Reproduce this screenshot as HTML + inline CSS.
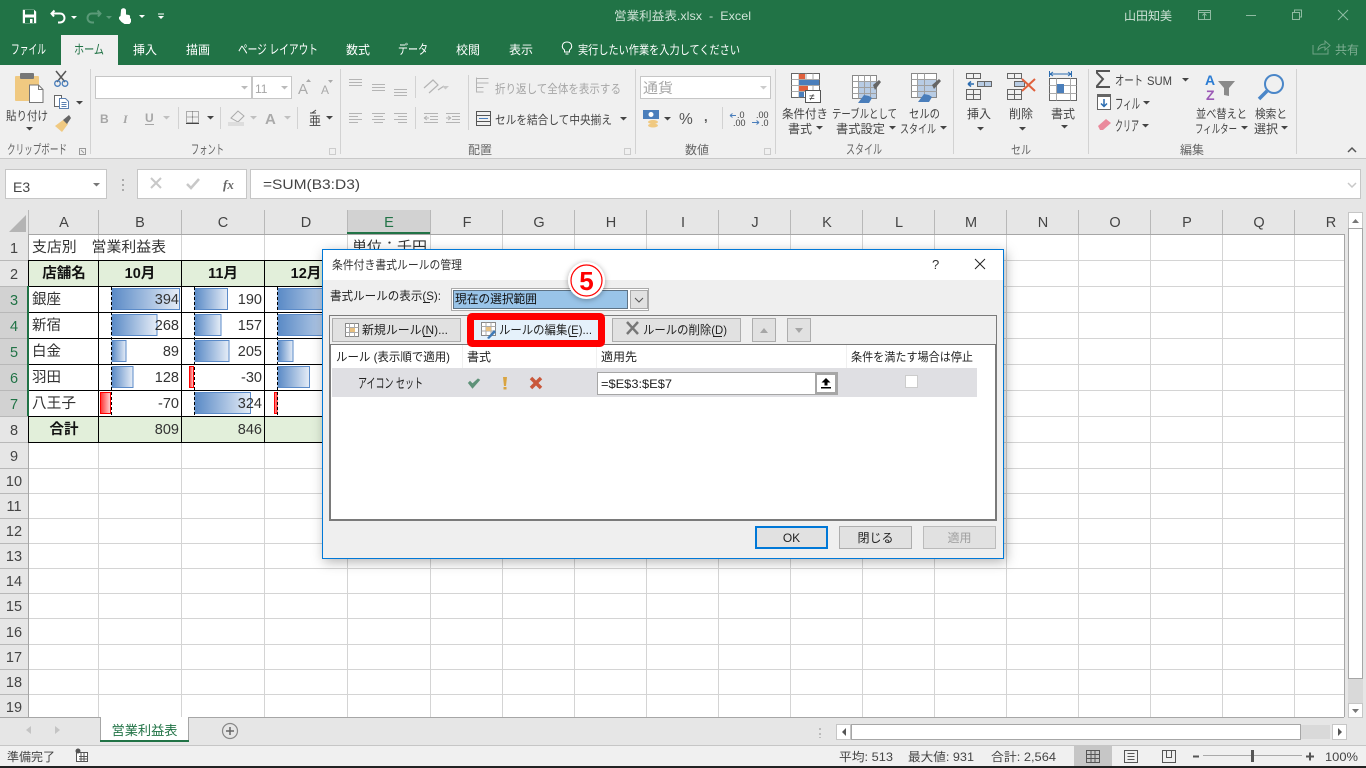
<!DOCTYPE html>
<html lang="ja"><head><meta charset="utf-8"><title>営業利益表.xlsx - Excel</title>
<style>
html,body{margin:0;padding:0;background:#e6e6e6;overflow:hidden}
svg{display:block;position:absolute;left:0;top:0}
text{font-family:"Liberation Sans","Noto Sans CJK JP",sans-serif;font-size:12px;fill:#444;white-space:pre}
.w text{fill:#fff}
.rb text{fill:#444}
.gl text{fill:#666}
.hd text{font-size:14.5px;fill:#444;text-anchor:middle}
.rn text{font-size:14.5px;fill:#444;text-anchor:middle}
.rs text{fill:#217346}
.c text{font-size:14.5px;fill:#333}
.n text{text-anchor:end}
.b text{font-weight:bold;fill:#111;text-anchor:middle}
.d text{fill:#222}
</style></head><body>
<svg width="1366" height="768" viewBox="0 0 1366 768" xmlns="http://www.w3.org/2000/svg">
<defs>
<linearGradient id="bl"><stop offset="0" stop-color="#5a8ac6"/><stop offset="1" stop-color="#e6edf7"/></linearGradient>
<linearGradient id="rd"><stop offset="0" stop-color="#ff3030"/><stop offset="1" stop-color="#ffd6d6"/></linearGradient>
<filter id="sh" x="-5%" y="-8%" width="110%" height="116%"><feDropShadow dx="2" dy="3" stdDeviation="6" flood-color="#000" flood-opacity=".3"/></filter>
<filter id="gl" x="-40%" y="-40%" width="180%" height="180%"><feDropShadow dx="0" dy="1" stdDeviation="3" flood-color="#000" flood-opacity=".35"/></filter>
<path id="dd" d="M0 0h7l-3.500 3.500z"/>
</defs>

<!-- backgrounds -->
<rect width="1366" height="768" fill="#e6e6e6"/>
<rect width="1366" height="65" fill="#217346"/>
<rect y="65" width="1366" height="93" fill="#f0f0f0"/>
<rect y="158" width="1366" height="1" fill="#c8c8c8"/>

<!-- QAT -->
<g fill="none" stroke="#fff" stroke-width="1.500">
<path d="M22.800 9.800h11.400l2 2v11.400h-13.400z" fill="#fff" stroke="none"/>
<rect x="25" y="10" width="9" height="4.500" fill="#217346" stroke="none"/>
<rect x="25" y="17.500" width="9" height="5.500" fill="#217346" stroke="none"/>
<rect x="30" y="19" width="2.500" height="4" fill="#fff" stroke="none"/>
<path d="M54 16.500l-2.500-3 3-3M52 13.500h8c6 0 6 9 0 9h-2" stroke-width="2"/>
<path d="M98 16.500l2.500-3-3-3M100 13.500h-8c-6 0-6 9 0 9h2" stroke="#5a9a78" stroke-width="2"/>
</g>
<path d="M71 16h6l-3 3z" fill="#fff"/><path d="M106 16h6l-3 3z" fill="#5a9a78"/><path d="M139 15h6l-3 3z" fill="#fff"/>
<path d="M121 10.500c0-3 5-3 5 0v4l3 .5c1.500.500 1 2 1 3l1 1v3l-1.500 2h-5l-3-2-2.500-3v-2l1.500-1z" fill="#fff"/>
<path d="M158 13.500h6v1h-6zM158 16h6l-3 3z" fill="#fff"/>

<!-- title -->
<g fill="#cfe3d7">
<text x="614" y="20" textLength="137" lengthAdjust="spacingAndGlyphs" style="fill:#cfe3d7">営業利益表.xlsx  -  Excel</text>
<text x="1124" y="20" textLength="48" lengthAdjust="spacingAndGlyphs" style="fill:#cfe3d7">山田知美</text>
</g>
<g fill="none" stroke="#8fbba2" stroke-width="1">
<path d="M1198.500 10.500h12v9h-12zM1198.500 12.500h12M1204.500 19v-5M1202.500 15.500l2-2 2 2"/>
<path d="M1246 15.500h10"/>
<path d="M1292.500 12.500h7v7h-7zM1294.500 12v-2h7v7h-2"/>
<path d="M1338 10l10 10M1348 10l-10 10"/>
<path d="M1313 45v9h15v-5M1318 50c0-4 3-6 7-6v-3l5 4.500-5 4.500v-3c-3 0-5 1-7 3z" stroke="#6fa385"/>
</g>
<text x="1335" y="54" textLength="24" lengthAdjust="spacingAndGlyphs" style="fill:#7fae93">共有</text>

<!-- tabs -->
<rect x="61" y="35" width="57" height="30" fill="#f0f0f0"/>
<g class="w">
<text x="11" y="54" textLength="35" lengthAdjust="spacingAndGlyphs" style="font-size:13px">ファイル</text>
<text x="74" y="54" textLength="30" lengthAdjust="spacingAndGlyphs" style="fill:#217346;font-size:13px">ホーム</text>
<text x="133" y="54" textLength="24" lengthAdjust="spacingAndGlyphs">挿入</text>
<text x="186" y="54" textLength="24" lengthAdjust="spacingAndGlyphs">描画</text>
<text x="238" y="54" textLength="80" lengthAdjust="spacingAndGlyphs" style="font-size:13px">ページ レイアウト</text>
<text x="346" y="54" textLength="24" lengthAdjust="spacingAndGlyphs">数式</text>
<text x="398" y="54" textLength="30" lengthAdjust="spacingAndGlyphs" style="font-size:13px">データ</text>
<text x="456" y="54" textLength="24" lengthAdjust="spacingAndGlyphs">校閲</text>
<text x="509" y="54" textLength="24" lengthAdjust="spacingAndGlyphs">表示</text>
<text x="578" y="54" textLength="162" lengthAdjust="spacingAndGlyphs">実行したい作業を入力してください</text>
</g>
<path d="M564.500 52v-2c-4-3-2-8 2.500-8s6.500 5 2.500 8v2zM565.500 54h3" fill="none" stroke="#fff" stroke-width="1"/>

<!-- group separators -->
<path d="M90.500 69v85M340.500 69v85M635.500 69v85M775.500 69v85M953.500 69v85M1088.500 69v85M1296.500 69v85" stroke="#d2d2d2" fill="none"/>
<path d="M468.500 75v55M178.500 107v22M220.500 107v22M297.500 107v22M415.500 76v22M415.500 107v22M722.500 107v22" stroke="#d2d2d2" fill="none"/>

<!-- clipboard -->
<rect x="15" y="76" width="24" height="25" rx="1" fill="#f0c981"/>
<rect x="20" y="73" width="14" height="6" rx="1" fill="#777"/>
<path d="M29.500 85h9l4.500 4.500v13h-13.500z" fill="#fff" stroke="#777"/>
<path d="M38.500 85v4.500h4.500" fill="none" stroke="#777"/>
<path d="M56 71l9 11M66 71l-9 11" stroke="#555" stroke-width="1.500"/>
<circle cx="57.500" cy="83.500" r="2.800" fill="none" stroke="#4a7ebb" stroke-width="1.300"/><circle cx="65" cy="83.500" r="2.800" fill="none" stroke="#4a7ebb" stroke-width="1.300"/>
<path d="M54.500 95.500h7v11h-7z" fill="#fff" stroke="#666"/>
<path d="M59.500 98.500h6l3 3v7h-9z" fill="#fff" stroke="#5a7fb0"/>
<path d="M61.500 102.500h5M61.500 104.500h5M61.500 106.500h5" stroke="#5a7fb0"/>
<use href="#dd" x="76" y="101" fill="#444"/>
<path d="M55 126l8-6 5 4-6 8z" fill="#f0c981"/><path d="M63 120l6-5 2 3-4 6z" fill="#666"/>
<text x="6" y="120" textLength="42" lengthAdjust="spacingAndGlyphs">貼り付け</text>
<use href="#dd" x="26" y="127" fill="#444"/>
<g class="gl">
<text x="7" y="154" textLength="60" lengthAdjust="spacingAndGlyphs" style="font-size:13px">クリップボード</text>
<text x="191" y="154" textLength="33" lengthAdjust="spacingAndGlyphs" style="font-size:13px">フォント</text>
<text x="468" y="154" textLength="24" lengthAdjust="spacingAndGlyphs">配置</text>
<text x="685" y="154" textLength="24" lengthAdjust="spacingAndGlyphs">数値</text>
<text x="846" y="154" textLength="36" lengthAdjust="spacingAndGlyphs" style="font-size:13px">スタイル</text>
<text x="1011" y="154" textLength="20" lengthAdjust="spacingAndGlyphs">セル</text>
<text x="1180" y="154" textLength="24" lengthAdjust="spacingAndGlyphs">編集</text>
</g>
<g fill="none" stroke="#999"><path d="M79.500 148.500h6v6h-6z"/><path d="M81 150l3 3"/></g>
<g fill="none" stroke="#ccc"><path d="M329.500 148.500h6v6h-6zM624.500 148.500h6v6h-6zM764.500 148.500h6v6h-6z"/></g>

<!-- font -->
<rect x="95.500" y="76.500" width="156" height="22" fill="#fff" stroke="#c6c6c6"/>
<rect x="252.500" y="76.500" width="39" height="22" fill="#fff" stroke="#c6c6c6"/>
<use href="#dd" x="241" y="86" fill="#bbb"/><use href="#dd" x="281" y="86" fill="#bbb"/>
<text x="255" y="93" style="fill:#a6a6a6">11</text>
<text x="298" y="94" style="font-size:15px;fill:#aaa">A</text><path d="M306 82h5l-2.500-3z" fill="#aaa"/>
<text x="321" y="94" style="font-size:12px;fill:#aaa">A</text><path d="M328 80h5l-2.500 3z" fill="#aaa"/>
<text x="100" y="123" style="font-weight:bold;fill:#a6a6a6">B</text>
<text x="123" y="123" style="font-style:italic;font-family:'Liberation Serif',serif;font-weight:bold;fill:#a6a6a6">I</text>
<text x="145" y="122" style="font-weight:bold;fill:#a6a6a6">U</text><path d="M145 124.500h9" stroke="#a6a6a6"/>
<use href="#dd" x="163" y="116" fill="#c0c0c0"/>
<path d="M186.500 111.500h12v11h-12zM192.500 111.500v11M186.500 117h12" fill="none" stroke="#666" stroke-dasharray="1 1"/><path d="M186 123.500h13" stroke="#444"/>
<use href="#dd" x="207" y="116" fill="#444"/>
<path d="M231 118l7-7 6 5-6 6z" fill="none" stroke="#aaa"/><rect x="228" y="122" width="16" height="4" fill="#ddd"/>
<use href="#dd" x="250" y="116" fill="#c0c0c0"/>
<text x="265" y="124" style="font-size:15px;font-weight:bold;fill:#aaa">A</text>
<use href="#dd" x="284" y="116" fill="#c0c0c0"/>
<text x="309" y="125" style="font-size:12px">亜</text><path d="M310 113h6M316 110l-4 3" stroke="#444" fill="none"/>
<use href="#dd" x="326" y="116" fill="#444"/>

<!-- alignment -->
<path d="M349 79.500h13M349 82.500h13M349 85.500h13M372 84.500h13M372 87.500h13M372 90.500h13M394 89.500h13M394 92.500h13M394 95.500h13" stroke="#b4b4b4" fill="none"/>
<path d="M349 113.500h13M349 116.500h9M349 119.500h13M349 122.500h9M372 113.500h13M374 116.500h9M372 119.500h13M374 122.500h9M394 113.500h13M398 116.500h9M394 119.500h13M398 122.500h9" stroke="#b4b4b4" fill="none"/>
<path d="M424 113.500h14M430 116.500h8M430 119.500h8M424 122.500h14M424 118h5M424 118l3-2M424 118l3 2M446 113.500h14M452 116.500h8M452 119.500h8M446 122.500h14M446 118h5M451 118l-3-2M451 118l-3 2" stroke="#b4b4b4" fill="none"/>
<path d="M424 88l9-8 5 5-9 8M438 90l6-4" fill="none" stroke="#b4b4b4" stroke-width="1.200"/><use href="#dd" x="442" y="86" fill="#c8c8c8"/>
<path d="M476.500 78.500h12M476.500 83h12M476.500 87.500h7M476.500 92h7" stroke="#b4b4b4" fill="none"/><path d="M476.500 77.500v15" stroke="#b4b4b4"/>
<text x="495" y="93" textLength="126" lengthAdjust="spacingAndGlyphs" style="fill:#a6a6a6">折り返して全体を表示する</text>
<rect x="476.500" y="111.500" width="14" height="14" fill="none" stroke="#555"/><path d="M477 115.500h13M477 121.500h13" stroke="#555" fill="none"/><path d="M479 118.500h9" stroke="#4a7ebb"/>
<text x="495" y="124" textLength="117" lengthAdjust="spacingAndGlyphs">セルを結合して中央揃え</text>
<use href="#dd" x="620" y="117" fill="#444"/>

<!-- number -->
<rect x="640.500" y="76.500" width="130" height="22" fill="#fff" stroke="#c6c6c6"/>
<text x="643" y="93" textLength="30" lengthAdjust="spacingAndGlyphs" style="fill:#a6a6a6;font-size:14px">通貨</text>
<use href="#dd" x="760" y="86" fill="#ccc"/>
<rect x="643" y="110" width="16" height="9" fill="#4a7ebb"/><circle cx="651" cy="114.500" r="2.500" fill="#fff"/>
<ellipse cx="653" cy="122" rx="5" ry="2" fill="#f0c981"/><ellipse cx="653" cy="125.500" rx="5" ry="2" fill="#f0c981"/>
<use href="#dd" x="664" y="117" fill="#444"/>
<text x="679" y="124" style="font-size:15.500px;fill:#555">%</text>
<text x="704" y="121" style="font-size:13px;font-weight:bold;fill:#555">,</text>
<text x="737" y="118" style="font-size:9px">.0</text><text x="733" y="126" style="font-size:9px">.00</text>
<path d="M730 115.500h6M730 115.500l2.500-2M730 115.500l2.500 2" stroke="#4a7ebb" fill="none"/>
<text x="756" y="118" style="font-size:9px">.00</text><text x="761" y="126" style="font-size:9px">.0</text>
<path d="M752 122.500h7M759 122.500l-2.500-2M759 122.500l-2.500 2" stroke="#4a7ebb" fill="none"/>

<!-- styles -->
<rect x="791.500" y="73.500" width="28" height="24" fill="#fff" stroke="#666"/>
<path d="M791.500 79.500h28M791.500 85.500h28M791.500 91.500h28M799 73.500v24M806 73.500v24M813 73.500v24" stroke="#aaa" fill="none"/>
<rect x="799" y="74" width="6" height="5" fill="#e0603c"/><rect x="799" y="80" width="20" height="5" fill="#4a7ebb"/><rect x="799" y="86" width="9" height="5" fill="#e0603c"/><rect x="799" y="92" width="5" height="5" fill="#4a7ebb"/>
<rect x="805.500" y="90.500" width="15" height="12" fill="#fff" stroke="#555"/><text x="809" y="100.500" style="font-size:10px;fill:#333">≠</text>
<rect x="852.500" y="75.500" width="24" height="23" fill="#fff" stroke="#888"/>
<rect x="858" y="81" width="18" height="17" fill="#b8cce4"/>
<path d="M852.500 81.500h24M852.500 87.500h24M852.500 93.500h24M858.500 75.500v23M864.500 75.500v23M870.500 75.500v23" stroke="#a0a0a0" fill="none"/>
<path d="M873 85l6-5 2 2-6 8z" fill="#666"/><path d="M858 103l6-8 5 1 3 2-3 5z" fill="#4a7ebb"/>
<rect x="911.500" y="73.500" width="25" height="24" fill="#fff" stroke="#888"/>
<rect x="917" y="79" width="19" height="18" fill="#b8cce4"/>
<path d="M911.500 79.500h25M911.500 85.500h25M911.500 91.500h25M917.500 73.500v24M924.500 73.500v24" stroke="#a0a0a0" fill="none"/>
<path d="M932 85l7-6 2 2-7 8z" fill="#666"/><path d="M918 102l6-8 5 1 3 2-3 5z" fill="#4a7ebb"/>
<text x="782" y="118" textLength="46" lengthAdjust="spacingAndGlyphs">条件付き</text>
<text x="788" y="133" textLength="24" lengthAdjust="spacingAndGlyphs">書式</text><use href="#dd" x="816" y="126" fill="#444"/>
<text x="832" y="118" textLength="65" lengthAdjust="spacingAndGlyphs">テーブルとして</text>
<text x="836" y="133" textLength="49" lengthAdjust="spacingAndGlyphs">書式設定</text><use href="#dd" x="889" y="126" fill="#444"/>
<text x="909" y="118" textLength="31" lengthAdjust="spacingAndGlyphs">セルの</text>
<text x="900" y="133" textLength="36" lengthAdjust="spacingAndGlyphs">スタイル</text><use href="#dd" x="940" y="126" fill="#444"/>

<!-- cells -->
<g fill="none" stroke="#666">
<path d="M966.500 73.500h14v5h-14zM973.500 73.500v5M966.500 89.500h14v10h-14zM973.500 89.500v10M966.500 94.500h14"/>
<path d="M1007.500 73.500h14v5h-14zM1014.500 73.500v5M1007.500 89.500h14v10h-14zM1014.500 89.500v10M1007.500 94.500h14"/>
</g>
<rect x="977.500" y="81.500" width="14" height="5" fill="#b8cce4" stroke="#666"/><path d="M984.500 81.500v5" stroke="#666"/>
<path d="M968 84h6M968 84l3-2.500M968 84l3 2.500" fill="none" stroke="#2b6cb0" stroke-width="1.500"/>
<rect x="1014.500" y="81.500" width="10" height="5" fill="#b8cce4" stroke="#666"/>
<path d="M1022 79l13 12M1035 79l-13 12" stroke="#e0603c" stroke-width="2"/>
<rect x="1049.500" y="78.500" width="27" height="22" fill="#fff" stroke="#666"/>
<path d="M1049.500 85.500h27M1049.500 93.500h27M1056.500 78.500v22M1070.500 78.500v22" stroke="#aaa" fill="none"/>
<rect x="1057" y="84" width="7" height="9" fill="#4a7ebb"/>
<path d="M1049.500 71v6M1071.500 71v6M1050 74h21M1050 74l3-2M1050 74l3 2M1071 74l-3-2M1071 74l-3 2" stroke="#2b6cb0" fill="none"/>
<text x="967" y="118" textLength="24" lengthAdjust="spacingAndGlyphs">挿入</text><use href="#dd" x="977" y="127" fill="#444"/>
<text x="1009" y="118" textLength="24" lengthAdjust="spacingAndGlyphs">削除</text><use href="#dd" x="1019" y="127" fill="#444"/>
<text x="1051" y="118" textLength="24" lengthAdjust="spacingAndGlyphs">書式</text><use href="#dd" x="1061" y="125" fill="#444"/>

<!-- edit -->
<path d="M1110 71h-13v2l6 6-6 7v1h13" fill="none" stroke="#555" stroke-width="2"/>
<text x="1115" y="85" textLength="28" lengthAdjust="spacingAndGlyphs" style="font-size:13px">オート</text><text x="1147" y="85" textLength="25" lengthAdjust="spacingAndGlyphs">SUM</text><use href="#dd" x="1182" y="78" fill="#444"/>
<rect x="1097.500" y="94.500" width="13" height="15" fill="#fff" stroke="#666"/><rect x="1097" y="94" width="14" height="3" fill="#666"/>
<path d="M1104 99v7M1101 103.500l3 3 3-3" fill="none" stroke="#2b6cb0" stroke-width="1.500"/>
<text x="1115" y="109" textLength="25" lengthAdjust="spacingAndGlyphs" style="font-size:14px">フィル</text><use href="#dd" x="1143" y="101" fill="#444"/>
<path d="M1098 126l8-7 5 4-8 7h-3z" fill="#ea8a9c"/>
<text x="1115" y="131" textLength="24" lengthAdjust="spacingAndGlyphs" style="font-size:14px">クリア</text><use href="#dd" x="1142" y="124" fill="#444"/>
<text x="1205" y="85" style="font-size:14px;font-weight:bold;fill:#2b7cd3">A</text>
<text x="1206" y="100" style="font-size:14px;font-weight:bold;fill:#9b59b6">Z</text>
<path d="M1218 81h17l-6 7v8l-5-1v-7z" fill="#8a8a8a"/>
<circle cx="1274" cy="84" r="9" fill="none" stroke="#4a86c8" stroke-width="2"/>
<path d="M1267 91l-8 8" stroke="#4a86c8" stroke-width="3.500"/>
<text x="1196" y="118" textLength="51" lengthAdjust="spacingAndGlyphs">並べ替えと</text>
<text x="1195" y="133" textLength="42" lengthAdjust="spacingAndGlyphs">フィルター</text><use href="#dd" x="1241" y="126" fill="#444"/>
<text x="1255" y="118" textLength="32" lengthAdjust="spacingAndGlyphs">検索と</text>
<text x="1254" y="133" textLength="24" lengthAdjust="spacingAndGlyphs">選択</text><use href="#dd" x="1281" y="126" fill="#444"/>
<path d="M1348 152l4-4 4 4" fill="none" stroke="#555" stroke-width="1.500"/>

<!-- formula bar -->
<rect x="5.500" y="169.500" width="101" height="29" fill="#fff" stroke="#c6c6c6"/>
<text x="13" y="192" style="font-size:14px">E3</text>
<use href="#dd" x="93" y="183" fill="#777"/>
<path d="M122 179h2v2h-2zM122 184h2v2h-2zM122 189h2v2h-2z" fill="#aaa"/>
<rect x="137.500" y="169.500" width="109" height="29" fill="#fff" stroke="#c6c6c6"/>
<path d="M151 178l10 10M161 178l-10 10" stroke="#c8c8c8" stroke-width="2"/>
<path d="M187 184l4 4 8-9" fill="none" stroke="#c8c8c8" stroke-width="2.500"/>
<text x="223" y="189" style="font-family:'Liberation Serif',serif;font-style:italic;font-weight:bold;font-size:13px;fill:#666">fx</text>
<rect x="250.500" y="169.500" width="1110" height="29" fill="#fff" stroke="#c6c6c6"/>
<text x="263" y="189" textLength="97" lengthAdjust="spacingAndGlyphs" style="font-size:14px">=SUM(B3:D3)</text>
<path d="M1348 183l4 4 4-4" fill="none" stroke="#c8c8c8" stroke-width="1.500"/>

<!-- sheet area -->
<rect x="29" y="234" width="1315" height="483" fill="#fff"/>
<rect x="0" y="210" width="1344" height="24" fill="#e6e6e6"/>
<rect x="0" y="234" width="29" height="483" fill="#e6e6e6"/>
<rect x="347" y="210" width="83" height="24" fill="#d2d2d2"/>
<rect x="0" y="286" width="29" height="130" fill="#d2d2d2"/>
<path d="M9 232h17v-17z" fill="#b4b4b4"/>
<path d="M98.500 234V717M181.500 234V717M264.500 234V717M347.500 234V717M430.500 234V717M502.500 234V717M574.500 234V717M646.500 234V717M718.500 234V717M790.500 234V717M862.500 234V717M934.500 234V717M1006.500 234V717M1078.500 234V717M1150.500 234V717M1222.500 234V717M1294.500 234V717" stroke="#d4d4d4" fill="none"/>
<path d="M29 260.500H1344M29 286.500H1344M29 312.500H1344M29 338.500H1344M29 364.500H1344M29 390.500H1344M29 416.500H1344M29 442.500H1344M29 468.500H1344M29 493.500H1344M29 518.500H1344M29 543.500H1344M29 568.500H1344M29 593.500H1344M29 618.500H1344M29 644.500H1344M29 669.500H1344M29 694.500H1344" stroke="#d4d4d4" fill="none"/>
<!-- header separators -->
<path d="M98.500 210v24M181.500 210v24M264.500 210v24M347.500 210v24M430.500 210v24M502.500 210v24M574.500 210v24M646.500 210v24M718.500 210v24M790.500 210v24M862.500 210v24M934.500 210v24M1006.500 210v24M1078.500 210v24M1150.500 210v24M1222.500 210v24M1294.500 210v24M28.500 210v24" stroke="#b8b8b8" fill="none"/>
<path d="M0 260.500h28M0 286.500h28M0 312.500h28M0 338.500h28M0 364.500h28M0 390.500h28M0 416.500h28M0 442.500h28M0 468.500h28M0 493.500h28M0 518.500h28M0 543.500h28M0 568.500h28M0 593.500h28M0 618.500h28M0 644.500h28M0 669.500h28M0 694.500h28" stroke="#b8b8b8" fill="none"/>
<path d="M28 234.500H1344M28.500 234V717M28 717.500H1344M1344.500 234V717" stroke="#a6a6a6" fill="none"/>
<rect x="347" y="232" width="83" height="2" fill="#217346"/>
<g class="hd">
<text x="64" y="227">A</text><text x="140" y="227">B</text><text x="223" y="227">C</text><text x="306" y="227">D</text><text x="389" y="227" style="fill:#217346">E</text><text x="467" y="227">F</text><text x="539" y="227">G</text><text x="611" y="227">H</text><text x="683" y="227">I</text><text x="755" y="227">J</text><text x="827" y="227">K</text><text x="899" y="227">L</text><text x="971" y="227">M</text><text x="1043" y="227">N</text><text x="1115" y="227">O</text><text x="1187" y="227">P</text><text x="1259" y="227">Q</text><text x="1331" y="227">R</text>
</g>
<g class="rn">
<text x="14" y="253">1</text><text x="14" y="279">2</text>
<g class="rs"><text x="14" y="305">3</text><text x="14" y="331">4</text><text x="14" y="357">5</text><text x="14" y="383">6</text><text x="14" y="409">7</text></g>
<text x="14" y="435">8</text><text x="14" y="461">9</text><text x="14" y="486">10</text><text x="14" y="511">11</text><text x="14" y="536">12</text><text x="14" y="561">13</text><text x="14" y="586">14</text><text x="14" y="611">15</text><text x="14" y="637">16</text><text x="14" y="662">17</text><text x="14" y="687">18</text><text x="14" y="712">19</text>
</g>

<!-- table fills -->
<rect x="29" y="261" width="319" height="25" fill="#e2efda"/>
<rect x="29" y="417" width="319" height="25" fill="#e2efda"/>
<rect x="29" y="287" width="319" height="129" fill="#fff"/>

<!-- data bars -->
<g stroke="#5b8bc9" stroke-width="1">
<rect x="112" y="288.500" width="67.500" height="21" fill="url(#bl)"/>
<rect x="112" y="314.500" width="45" height="21" fill="url(#bl)"/>
<rect x="112" y="340.500" width="14" height="21" fill="url(#bl)"/>
<rect x="112" y="366.500" width="21" height="21" fill="url(#bl)"/>
<rect x="195" y="288.500" width="32.500" height="21" fill="url(#bl)"/>
<rect x="195" y="314.500" width="26" height="21" fill="url(#bl)"/>
<rect x="195" y="340.500" width="34" height="21" fill="url(#bl)"/>
<rect x="195" y="392.500" width="55.500" height="21" fill="url(#bl)"/>
<rect x="278" y="288.500" width="70" height="21" fill="url(#bl)"/>
<rect x="278" y="314.500" width="70" height="21" fill="url(#bl)"/>
<rect x="278" y="340.500" width="15" height="21" fill="url(#bl)"/>
<rect x="278" y="366.500" width="31.500" height="21" fill="url(#bl)"/>
</g>
<g stroke="#f00" stroke-width="1">
<rect x="100.500" y="392.500" width="10" height="21" fill="url(#rd)"/>
<rect x="189.500" y="366.500" width="4" height="21" fill="url(#rd)"/>
<rect x="274.500" y="392.500" width="2.500" height="21" fill="url(#rd)"/>
</g>
<path d="M111.500 287V416M194.500 287V416M277.500 287V416" stroke="#000" stroke-dasharray="3 2" fill="none"/>
<!-- table borders -->
<path d="M28 260.500H348M28 286.500H348M28 312.500H348M28 338.500H348M28 364.500H348M28 390.500H348M28 416.500H348M28 442.500H348M28.500 260V443M98.500 260V443M181.500 260V443M264.500 260V443M347.500 260V443" stroke="#000" fill="none"/>
<rect x="27" y="286" width="2" height="130" fill="#217346"/>

<!-- cell text -->
<g class="c">
<text x="32" y="252" textLength="134" lengthAdjust="spacingAndGlyphs">支店別　営業利益表</text>
<text x="352" y="252" textLength="75" lengthAdjust="spacingAndGlyphs">単位：千円</text>
<text x="32" y="304" textLength="29" lengthAdjust="spacingAndGlyphs">銀座</text>
<text x="32" y="330" textLength="29" lengthAdjust="spacingAndGlyphs">新宿</text>
<text x="32" y="356" textLength="29" lengthAdjust="spacingAndGlyphs">白金</text>
<text x="32" y="382" textLength="29" lengthAdjust="spacingAndGlyphs">羽田</text>
<text x="32" y="408" textLength="44" lengthAdjust="spacingAndGlyphs">八王子</text>
</g>
<g class="c b">
<text x="64" y="278">店舗名</text><text x="140" y="278">10月</text><text x="223" y="278">11月</text><text x="306" y="278">12月</text>
<text x="64" y="434">合計</text>
</g>
<g class="c n">
<text x="179" y="304">394</text><text x="179" y="330">268</text><text x="179" y="356">89</text><text x="179" y="382">128</text><text x="179" y="408">-70</text><text x="179" y="434">809</text>
<text x="262" y="304">190</text><text x="262" y="330">157</text><text x="262" y="356">205</text><text x="262" y="382">-30</text><text x="262" y="408">324</text><text x="262" y="434">846</text>
</g>

<!-- dialog -->
<rect x="322.500" y="249.500" width="681" height="309" fill="#efefef" stroke="#0078d7" filter="url(#sh)"/>
<rect x="323" y="250" width="680" height="30" fill="#fff"/>
<text x="332" y="269" textLength="130" lengthAdjust="spacingAndGlyphs" style="fill:#333">条件付き書式ルールの管理</text>
<text x="932" y="269" style="font-size:13px;fill:#333">?</text>
<path d="M975 259l10 10M985 259l-10 10" stroke="#222" fill="none"/>
<g class="d">
<text x="330" y="300" textLength="111" lengthAdjust="spacingAndGlyphs">書式ルールの表示(S):</text>
</g>
<path d="M423 302.500h7" stroke="#222"/>
<rect x="451.500" y="288.500" width="197" height="22" fill="#fff" stroke="#aaa"/>
<rect x="453" y="290" width="175" height="19" fill="#99c4e8"/>
<rect x="453.500" y="290.500" width="174" height="18" fill="none" stroke="#222" stroke-dasharray="1 1"/>
<rect x="630.500" y="290.500" width="17" height="18" fill="#e1e1e1" stroke="#aaa"/>
<path d="M635 298l4 4 4-4" fill="none" stroke="#555"/>
<text x="455" y="303" textLength="82" lengthAdjust="spacingAndGlyphs" style="fill:#111">現在の選択範囲</text>

<rect x="329.500" y="315.500" width="667" height="205" fill="#efefef" stroke="#7a7a7a"/>
<rect x="330.500" y="344.500" width="665" height="175" fill="#fff" stroke="#7a7a7a"/>
<rect x="332" y="345" width="645" height="23" fill="#fff"/>
<rect x="332" y="368" width="645" height="29" fill="#dfdfe3"/>
<path d="M462.500 345v23M596.500 345v23M846.500 345v23" stroke="#f0f0f0"/>

<!-- dialog buttons -->
<rect x="332.500" y="318.500" width="128" height="23" fill="#e1e1e1" stroke="#adadad"/>
<rect x="612.500" y="318.500" width="128" height="23" fill="#e1e1e1" stroke="#adadad"/>
<rect x="752.500" y="318.500" width="23" height="23" fill="#e1e1e1" stroke="#adadad"/>
<rect x="787.500" y="318.500" width="23" height="23" fill="#e1e1e1" stroke="#adadad"/>
<path d="M760 333l4-5 4 5z" fill="#a6a6a6"/><path d="M795 328l4 5 4-5z" fill="#a6a6a6"/>
<rect x="345.500" y="323.500" width="13" height="13" fill="#fff" stroke="#888"/><path d="M345.500 327.500h13M345.500 332.500h13M349.500 323.500v13M354.500 323.500v13" stroke="#aaa" fill="none"/><rect x="350" y="328" width="5" height="4" fill="#e8c080"/>
<text x="362" y="334" textLength="86" lengthAdjust="spacingAndGlyphs" style="fill:#222">新規ルール(N)...</text>
<path d="M423 336.500h8" stroke="#222"/>
<path d="M627 322l11 12M638 322l-11 12" stroke="#777" stroke-width="2.500"/>
<text x="643" y="334" textLength="84" lengthAdjust="spacingAndGlyphs" style="fill:#222">ルールの削除(D)</text>
<path d="M713 336.500h9" stroke="#222"/>

<rect x="467" y="313" width="138" height="34" rx="5" fill="#f00"/>
<rect x="474" y="320" width="124" height="20" fill="#e5f1fb"/>
<rect x="481.500" y="322.500" width="14" height="13" fill="#fff" stroke="#888"/><path d="M481.500 326.500h14M481.500 331h14M486 322.500v13M491 322.500v13" stroke="#aaa" fill="none"/><rect x="486" y="327" width="5" height="4" fill="#e8c080"/>
<path d="M487 338l7-8 2 2-7 7z" fill="#3f7ab8"/>
<text x="499" y="334" textLength="93" lengthAdjust="spacingAndGlyphs" style="fill:#222">ルールの編集(E)...</text>
<path d="M569 336.500h8" stroke="#222"/>

<!-- list -->
<g class="d">
<text x="336" y="361" textLength="114" lengthAdjust="spacingAndGlyphs">ルール (表示順で適用)</text>
<text x="467" y="361" textLength="24" lengthAdjust="spacingAndGlyphs">書式</text>
<text x="601" y="361" textLength="36" lengthAdjust="spacingAndGlyphs">適用先</text>
<text x="851" y="361" textLength="122" lengthAdjust="spacingAndGlyphs">条件を満たす場合は停止</text>
<text x="358" y="388" textLength="65" lengthAdjust="spacingAndGlyphs" style="font-size:13.500px">アイコン セット</text>
</g>
<path d="M468.500 383l4 5 7-8-1.500-1-5.500 5-2.500-2.500z" fill="#5f9279" stroke="#5f9279"/>
<path d="M503 377h4l-1 9h-2zM503.500 387h3v2.500h-3z" fill="#d9a441"/>
<path d="M531 378l10 10M541 378l-10 10" stroke="#c9573a" stroke-width="3.500"/>
<rect x="597.500" y="372.500" width="240" height="22" fill="#fff" stroke="#a6a6a6" stroke-width="1"/>
<rect x="815" y="372" width="23" height="23" fill="#a6a6a6"/>
<rect x="817" y="375" width="18" height="17" fill="#fff"/>
<path d="M826 378l-4.500 4.500h3v3h3v-3h3zM821 387h10v1.500h-10z" fill="#000"/>
<text x="601" y="388" textLength="71" lengthAdjust="spacingAndGlyphs" style="fill:#222">=$E$3:$E$7</text>
<rect x="905.500" y="375.500" width="12" height="12" fill="#fff" stroke="#ccc"/>

<!-- circled 5 -->
<circle cx="586.500" cy="280.500" r="18.500" fill="#fff" filter="url(#gl)"/>
<circle cx="586.500" cy="280.500" r="15.500" fill="#fff" stroke="#f00" stroke-width="1.200"/>
<text x="586.500" y="290" text-anchor="middle" style="font-size:26px;font-weight:bold;fill:#f00">5</text>

<!-- dialog footer -->
<rect x="756" y="527" width="71" height="21" fill="#e1e1e1" stroke="#0078d7" stroke-width="2"/>
<text x="791.500" y="542" text-anchor="middle" style="fill:#222">OK</text>
<rect x="839.500" y="526.500" width="72" height="22" fill="#e1e1e1" stroke="#adadad"/>
<text x="875.500" y="542" text-anchor="middle" style="fill:#222">閉じる</text>
<rect x="923.500" y="526.500" width="72" height="22" fill="#e1e1e1" stroke="#bbb"/>
<text x="959.500" y="542" text-anchor="middle" style="fill:#a0a0a0">適用</text>

<!-- vertical scrollbar -->
<rect x="1345" y="210" width="21" height="507" fill="#e6e6e6"/>
<rect x="1348" y="228" width="15" height="451" fill="#d9d9d9"/>
<rect x="1348.500" y="212.500" width="14" height="16" fill="#fff" stroke="#c6c6c6"/>
<path d="M1352 223l3.500-4 3.500 4z" fill="#777"/>
<rect x="1348.500" y="228.500" width="14" height="450" fill="#fff" stroke="#a6a6a6"/>
<rect x="1348" y="679" width="15" height="24" fill="#d9d9d9"/>
<rect x="1348.500" y="703.500" width="14" height="14" fill="#fff" stroke="#c6c6c6"/>
<path d="M1352 709l3.500 4 3.500-4z" fill="#777"/>

<!-- sheet tabs -->
<rect x="0" y="718" width="1366" height="27" fill="#e6e6e6"/>
<rect x="0" y="717" width="1344" height="1" fill="#a6a6a6"/>
<path d="M26 733l5-4v8zM60 733l-5-4v8z" transform="translate(0 -3)" fill="#c4c4c4"/>
<path d="M100.500 718v24M188.500 718v24" stroke="#a6a6a6"/>
<rect x="101" y="717" width="87" height="24" fill="#fff"/>
<rect x="100" y="740" width="89" height="2" fill="#217346"/>
<text x="144.500" y="735" text-anchor="middle" textLength="66" lengthAdjust="spacingAndGlyphs" style="fill:#217346;font-size:13px">営業利益表</text>
<circle cx="230" cy="731" r="7.500" fill="none" stroke="#888" stroke-width="1.200"/>
<path d="M226 731h8M230 727v8" stroke="#666" stroke-width="1.500"/>
<path d="M819 728h2v2h-2zM819 733h2v2h-2zM819 737h2v1h-2z" fill="#bbb"/>
<rect x="851" y="725" width="479" height="14" fill="#d9d9d9"/>
<rect x="836.500" y="724.500" width="14" height="15" fill="#fff" stroke="#c6c6c6"/>
<path d="M846 728l-4 4 4 4z" fill="#555"/>
<rect x="851.500" y="724.500" width="449" height="15" fill="#fff" stroke="#a6a6a6"/>
<rect x="1332.500" y="724.500" width="14" height="15" fill="#fff" stroke="#c6c6c6"/>
<path d="M1338 728l4 4-4 4z" fill="#555"/>

<!-- status bar -->
<rect x="0" y="745" width="1366" height="21" fill="#f0f0f0"/>
<rect x="0" y="745" width="1366" height="1" fill="#c6c6c6"/>
<rect x="0" y="766" width="1366" height="2" fill="#222"/>
<text x="7" y="761" textLength="48" lengthAdjust="spacingAndGlyphs">準備完了</text>
<rect x="76.500" y="752.500" width="11" height="9" fill="#fff" stroke="#555"/><circle cx="78" cy="751" r="2.500" fill="#555"/><path d="M79 756.500h8M79 759h8M81 753v8M84 753v8" stroke="#555" fill="none"/>
<text x="839" y="761" textLength="54" lengthAdjust="spacingAndGlyphs">平均: 513</text>
<text x="908" y="761" textLength="66" lengthAdjust="spacingAndGlyphs">最大値: 931</text>
<text x="991" y="761" textLength="65" lengthAdjust="spacingAndGlyphs">合計: 2,564</text>
<rect x="1074" y="746" width="38" height="20" fill="#c6c6c6"/>
<path d="M1086.500 750.500h13v12h-13zM1091 750.500v12M1095 750.500v12M1086.500 754.500h13M1086.500 758.500h13" fill="none" stroke="#555"/>
<path d="M1124.500 750.500h13v12h-13zM1127.500 753.500h7M1127.500 756.500h7M1127.500 759.500h7" fill="none" stroke="#555"/>
<path d="M1162.500 750.500h13v12h-13zM1166.500 750.500v7h5v-7" fill="none" stroke="#555"/>
<path d="M1193 756.500h6M1306 756.500h8M1310 752.500v8" stroke="#555" stroke-width="2"/>
<path d="M1203 755.500h99" stroke="#aaa" fill="none"/>
<rect x="1251" y="750" width="3" height="12" fill="#555"/>
<text x="1325" y="761" textLength="33" lengthAdjust="spacingAndGlyphs">100%</text>
</svg>
</body></html>
